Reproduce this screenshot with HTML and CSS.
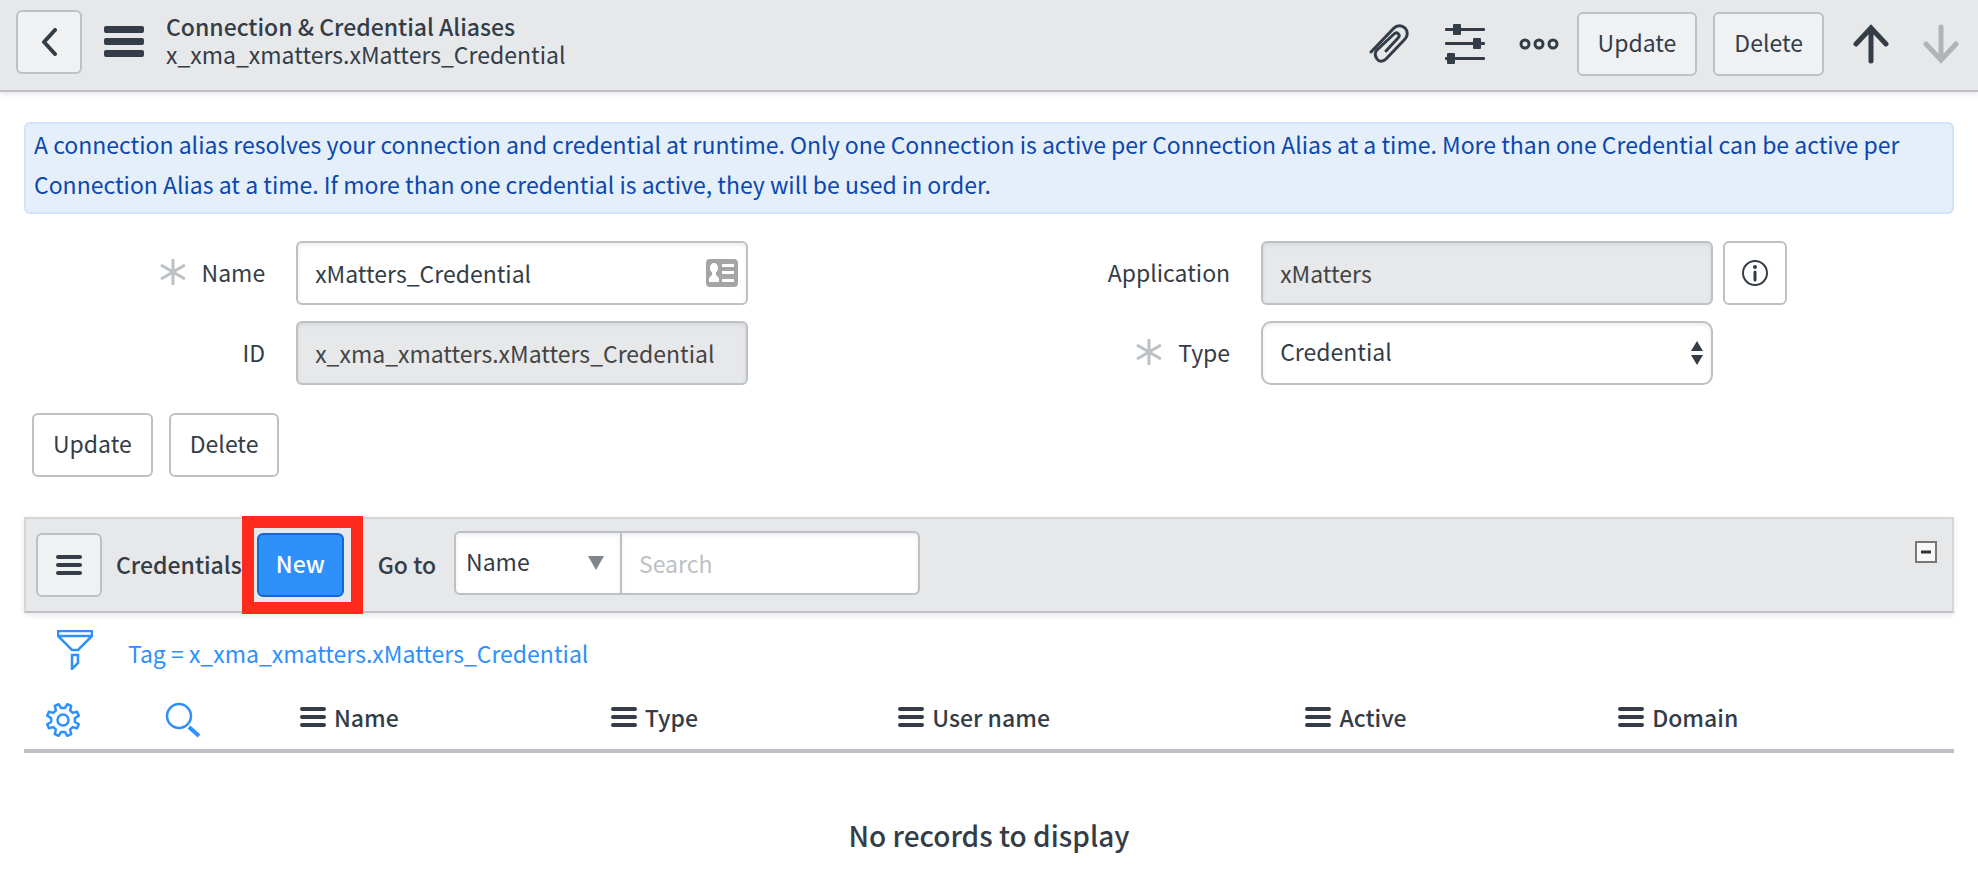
FILE: index.html
```html
<!DOCTYPE html>
<html lang="en">
<head>
<meta charset="utf-8">
<title>Connection &amp; Credential Aliases</title>
<link rel="stylesheet" href="styles.css">
</head>
<body>
<svg class="sprite" aria-hidden="true">
  <symbol id="bars" viewBox="0 0 26 20"><path d="M2 2h22M2 10h22M2 18h22" fill="none" stroke="currentColor" stroke-width="4" stroke-linecap="round"/></symbol>
  <symbol id="required" viewBox="0 0 26 26"><path d="M13 0v26M1 6l24 14M25 6L1 20" fill="none" stroke="currentColor" stroke-width="3"/></symbol>
</svg>

<header class="topbar">
  <button class="btn btn-square btn-tinted" type="button" aria-label="Back">
    <svg width="16" height="28" viewBox="0 0 16 28"><path d="M14 2L3 14l11 12" fill="none" stroke="currentColor" stroke-width="4" stroke-linecap="round" stroke-linejoin="round"/></svg>
  </button>
  <button class="icon-btn menu-btn" type="button" aria-label="Form menu">
    <svg width="40" height="32" viewBox="0 0 40 32"><g fill="currentColor"><rect width="40" height="7" rx="2"/><rect y="12" width="40" height="7" rx="2"/><rect y="24" width="40" height="7" rx="2"/></g></svg>
  </button>
  <h1 class="title">
    <span class="title-main">Connection &amp; Credential Aliases</span>
    <span class="title-sub">x_xma_xmatters.xMatters_Credential</span>
  </h1>
  <div class="topbar-icons">
    <button class="icon-btn" type="button" aria-label="Attachments">
      <svg width="42" height="40" viewBox="0 0 42 40"><path d="M2 28L25 4c3-3 8-3 11 0s3 8 0 11L17 35c-3 3-7 3-9 0s-3-6 0-9L25 10c3-3 7 1 4 4L17 27" fill="none" stroke="currentColor" stroke-width="3" stroke-linecap="round" stroke-linejoin="round"/></svg>
    </button>
    <button class="icon-btn" type="button" aria-label="Personalize form">
      <svg width="40" height="40" viewBox="0 0 40 40"><g fill="currentColor"><rect y="4" width="40" height="3" rx="1"/><rect y="18" width="40" height="3" rx="1"/><rect y="33" width="40" height="3" rx="1"/><rect x="8" width="8" height="11" rx="1"/><rect x="28" y="14" width="8" height="11" rx="1"/><rect x="2" y="29" width="8" height="11" rx="1"/></g></svg>
    </button>
    <button class="icon-btn" type="button" aria-label="More options">
      <svg width="40" height="12" viewBox="0 0 40 12"><g fill="none" stroke="currentColor" stroke-width="3"><circle cx="6" cy="6" r="4"/><circle cx="20" cy="6" r="4"/><circle cx="34" cy="6" r="4"/></g></svg>
    </button>
  </div>
  <div class="topbar-actions">
    <button class="btn btn-tinted" type="button">Update</button>
    <button class="btn btn-tinted" type="button">Delete</button>
  </div>
  <div class="topbar-nav">
    <button class="icon-btn" type="button" aria-label="Previous record">
      <svg width="36" height="40" viewBox="0 0 36 40"><path d="M18 37V4M3 20L18 4l15 16" fill="none" stroke="currentColor" stroke-width="5" stroke-linecap="round"/></svg>
    </button>
    <button class="icon-btn" type="button" aria-label="Next record" disabled>
      <svg width="36" height="40" viewBox="0 0 36 40"><path d="M18 3v33M3 20l15 16 15-16" fill="none" stroke="currentColor" stroke-width="5" stroke-linecap="round"/></svg>
    </button>
  </div>
</header>

<main class="content">
  <p class="notice">A connection alias resolves your connection and credential at runtime. Only one Connection is active per Connection Alias at a time. More than one Credential can be active per Connection Alias at a time. If more than one credential is active, they will be used in order.</p>

  <form>
    <div class="fields">
      <div class="field">
        <label class="label" for="name"><svg class="required" width="26" height="26"><use href="#required"/></svg>Name</label>
        <div class="control-wrap">
          <input class="control" id="name" type="text" value="xMatters_Credential">
          <svg class="card-icon" width="32" height="28" viewBox="0 0 32 28"><rect width="32" height="28" rx="4" fill="#a5a5a5"/><g fill="#fff"><ellipse cx="8" cy="9" rx="4" ry="5"/><path d="M6 12h4v4l3 3v4H3v-4l3-3z"/><rect x="16" y="5" width="12" height="3"/><rect x="16" y="12" width="12" height="3"/><rect x="16" y="20" width="12" height="3"/></g></svg>
        </div>
      </div>
      <div class="field">
        <label class="label" for="application">Application</label>
        <input class="control" id="application" type="text" value="xMatters" readonly>
        <button class="btn info-btn" type="button" aria-label="Application details">
          <svg width="26" height="26" viewBox="0 0 26 26"><circle cx="13" cy="13" r="12" fill="none" stroke="currentColor" stroke-width="2"/><path d="M13 12v8" stroke="currentColor" stroke-width="3" stroke-linecap="round"/><circle cx="13" cy="7" r="2" fill="currentColor"/></svg>
        </button>
      </div>
      <div class="field">
        <label class="label" for="record-id">ID</label>
        <input class="control" id="record-id" type="text" value="x_xma_xmatters.xMatters_Credential" readonly>
      </div>
      <div class="field">
        <label class="label" for="type"><svg class="required" width="26" height="26"><use href="#required"/></svg>Type</label>
        <div class="control-wrap">
          <select class="control type-select" id="type"><option>Credential</option></select>
          <svg class="updown" width="12" height="24" viewBox="0 0 12 24"><path d="M6 0l6 10H0zM6 24l6-10H0z" fill="currentColor"/></svg>
        </div>
      </div>
    </div>
    <div class="form-actions">
      <button class="btn" type="button">Update</button>
      <button class="btn" type="button">Delete</button>
    </div>
  </form>

  <section>
    <div class="listbar">
      <button class="btn btn-square btn-tinted" type="button" aria-label="List menu"><svg width="26" height="20"><use href="#bars"/></svg></button>
      <h2 class="list-title">Credentials</h2>
      <span class="highlight"><button class="btn btn-primary" type="button">New</button></span>
      <label class="goto-label" for="goto-field">Go to</label>
      <div class="goto">
        <div class="goto-select-wrap">
          <select class="control goto-select" id="goto-field"><option>Name</option></select>
          <svg class="caret" width="16" height="14" viewBox="0 0 16 14"><path d="M0 0h16L8 14z" fill="currentColor"/></svg>
        </div>
        <input class="control goto-input" type="text" placeholder="Search" aria-label="Search">
      </div>
      <button class="icon-btn collapse" type="button" aria-label="Collapse list">
        <svg width="22" height="22" viewBox="0 0 22 22"><rect x="1" y="1" width="20" height="20" fill="#f7f7f7" stroke="#777" stroke-width="2"/><path d="M6 11h10" stroke="#333" stroke-width="3"/></svg>
      </button>
    </div>

    <div class="filter">
      <button class="icon-btn link-color" type="button" aria-label="Filter">
        <svg width="36" height="40" viewBox="0 0 36 40"><path d="M1 1h34v5L21 20h-6L1 6zM1 6h34M15 25h6v8l-6 6z" fill="none" stroke="currentColor" stroke-width="2.500"/></svg>
      </button>
      <a class="link-color" href="#">Tag = x_xma_xmatters.xMatters_Credential</a>
    </div>

    <table class="list">
      <colgroup><col class="c-gear"><col class="c-find"><col class="c-name"><col class="c-type"><col class="c-user"><col class="c-active"><col></colgroup>
      <thead>
        <tr>
          <th class="gear-cell"><button class="icon-btn link-color" type="button" aria-label="Personalize list">
            <svg width="36" height="36" viewBox="-18 -18 36 36"><g fill="none" stroke="currentColor" stroke-width="2.500" stroke-linejoin="round"><circle r="5.500"/><path d="M11.900 1.900L15.800 4.300 14.100 8.200 9.700 7.100 7.100 9.700 8.200 14.100 4.300 15.800 1.900 11.900H-1.900L-4.300 15.800-8.200 14.100-7.100 9.700-9.700 7.100-14.100 8.200-15.800 4.300-11.900 1.900V-1.900L-15.800-4.300-14.100-8.200-9.700-7.100-7.100-9.700-8.200-14.100-4.300-15.800-1.900-11.900H1.900L4.300-15.800 8.200-14.100 7.100-9.700 9.700-7.100 14.100-8.200 15.800-4.300 11.900-1.900z"/></g></svg>
          </button></th>
          <th><button class="icon-btn link-color" type="button" aria-label="Search columns">
            <svg width="36" height="36" viewBox="0 0 36 36"><circle cx="14" cy="14" r="12" fill="none" stroke="currentColor" stroke-width="2.500"/><path d="M24 25l10 9" stroke="currentColor" stroke-width="4"/></svg>
          </button></th>
          <th><span class="col"><svg width="26" height="20"><use href="#bars"/></svg>Name</span></th>
          <th><span class="col"><svg width="26" height="20"><use href="#bars"/></svg>Type</span></th>
          <th><span class="col"><svg width="26" height="20"><use href="#bars"/></svg>User name</span></th>
          <th><span class="col"><svg width="26" height="20"><use href="#bars"/></svg>Active</span></th>
          <th><span class="col"><svg width="26" height="20"><use href="#bars"/></svg>Domain</span></th>
        </tr>
      </thead>
      <tbody>
        <tr><td class="empty" colspan="7">No records to display</td></tr>
      </tbody>
    </table>
  </section>
</main>
</body>
</html>
```
FILE: styles.css
```css
* { box-sizing: border-box; }

body {
  margin: 0;
  background: #fff;
  color: #343d47;
  font-family: "Noto Sans CJK SC", "Noto Sans", sans-serif;
  font-size: 23px;
  line-height: 28px;
}

button, input, select { font: inherit; color: inherit; }
svg { display: block; flex: none; }
.sprite { position: absolute; width: 0; height: 0; }

.btn {
  display: inline-flex;
  align-items: center;
  justify-content: center;
  height: 64px;
  padding: 0 19px 4px;
  background: #fff;
  border: 2px solid #bdc0c4;
  border-radius: 6px;
}
.btn-tinted { background: #f0f1f3; }
.btn-square { width: 66px; padding: 0; flex: none; }
.btn-primary {
  padding: 0 17px 4px;
  background: #2e90fa;
  border-color: #1469d0;
  color: #fff;
  font-weight: 500;
}
.icon-btn {
  display: inline-flex;
  padding: 0;
  border: 0;
  background: none;
}
.icon-btn:disabled { color: #b0b4b9; }
.link-color { color: #2e90fa; text-decoration: none; }

.topbar {
  display: flex;
  align-items: center;
  min-height: 92px;
  padding: 0 19px 6px 16px;
  background: #e6e8ea;
  border-bottom: 2px solid #bdc0c4;
  box-shadow: 0 2px 6px rgba(0, 0, 0, .1);
}
.menu-btn { margin: 0 22px; }
.title { margin: 0; padding-bottom: 4px; font-size: inherit; font-weight: 400; }
.title span { display: block; }
.title .title-main { font-weight: 500; }
.topbar-icons { display: flex; align-items: center; gap: 34px; margin-left: auto; padding-top: 4px; }
.topbar-actions { display: flex; gap: 16px; margin-left: 18px; padding-top: 4px; }
.topbar-nav { display: flex; gap: 34px; margin-left: 29px; padding-top: 4px; }

.content { padding: 30px 24px 0; }
.notice {
  margin: 0 0 27px;
  padding: 0 8px 8px;
  background: #e5effa;
  border: 2px solid #cfe3fa;
  border-radius: 6px;
  color: #0b48ae;
  line-height: 40px;
}

.fields { display: grid; grid-template-columns: 1fr 1fr; row-gap: 16px; }
.field { display: grid; grid-template-columns: 28.2% 46.8% 1fr; align-items: center; }
.label {
  display: flex;
  align-items: center;
  justify-content: flex-end;
  gap: 16px;
  padding: 0 31px 2px 0;
}
.required { color: #bdc0c4; }
.control-wrap, .goto-select-wrap { position: relative; }
.control {
  display: block;
  width: 100%;
  height: 64px;
  margin: 0;
  padding: 0 17px;
  background: #fff;
  border: 2px solid #bdc0c4;
  border-radius: 6px;
  box-shadow: inset 0 2px 4px rgba(0, 0, 0, .08);
}
.control:read-only:not(select) { background: #e6e8ea; color: #444; }
select.control { appearance: none; padding-bottom: 4px; }
.type-select { border-radius: 10px; }
.card-icon { position: absolute; right: 10px; top: 18px; }
.updown { position: absolute; right: 10px; top: 20px; pointer-events: none; }
.info-btn { width: 64px; margin-left: 10px; padding: 0; }
.form-actions { display: flex; gap: 16px; margin: 28px 8px 40px; }

.listbar {
  display: flex;
  align-items: center;
  min-height: 96px;
  padding: 0 15px 0 10px;
  background: #e6e8ea;
  border: 2px solid #d3d7db;
  border-bottom-color: #bdc0c4;
  box-shadow: 0 2px 6px rgba(0, 0, 0, .1);
}
.list-title { margin: 0 0 0 14px; padding-bottom: 2px; font-size: inherit; font-weight: 500; }
.highlight {
  display: flex;
  margin: -4px 0;
  padding: 5px 7px 5px 3px;
  border: 12px solid #fe2a1d;
}
.goto-label { margin: 0 18px 0 15px; padding-bottom: 2px; font-weight: 500; }
.goto { display: flex; padding-bottom: 4px; }
.goto-select-wrap { width: 168px; }
.goto-select { padding-left: 10px; border-radius: 6px 0 0 6px; }
.caret { position: absolute; right: 18px; top: 25px; color: #7f858b; pointer-events: none; }
.goto-input { width: 300px; margin-left: -2px; border-radius: 0 6px 6px 0; }
.goto-input::placeholder { color: #bdc0c4; opacity: 1; }
.collapse { align-self: flex-start; margin: 22px 0 0 auto; }

.filter { display: flex; align-items: center; gap: 35px; padding: 17px 0 0 33px; }
.filter a { padding-top: 6px; }

.list { width: 100%; margin-top: 18px; table-layout: fixed; border-collapse: collapse; }
.c-gear { width: 7.3%; }
.c-find { width: 7%; }
.c-name { width: 16.1%; }
.c-type { width: 14.9%; }
.c-user { width: 21.1%; }
.c-active { width: 16.2%; }
.list th {
  height: 63px;
  padding: 0;
  border-bottom: 4px solid #bdc0c4;
  font-weight: 500;
  text-align: left;
  vertical-align: middle;
}
.list th .icon-btn { display: flex; margin-top: 2px; }
.list .gear-cell { padding-left: 21px; }
.col { display: flex; align-items: center; gap: 8px; padding-bottom: 4px; }
.list .empty { padding: 62px 0 0; font-size: 28px; font-weight: 500; line-height: 40px; text-align: center; }
```
